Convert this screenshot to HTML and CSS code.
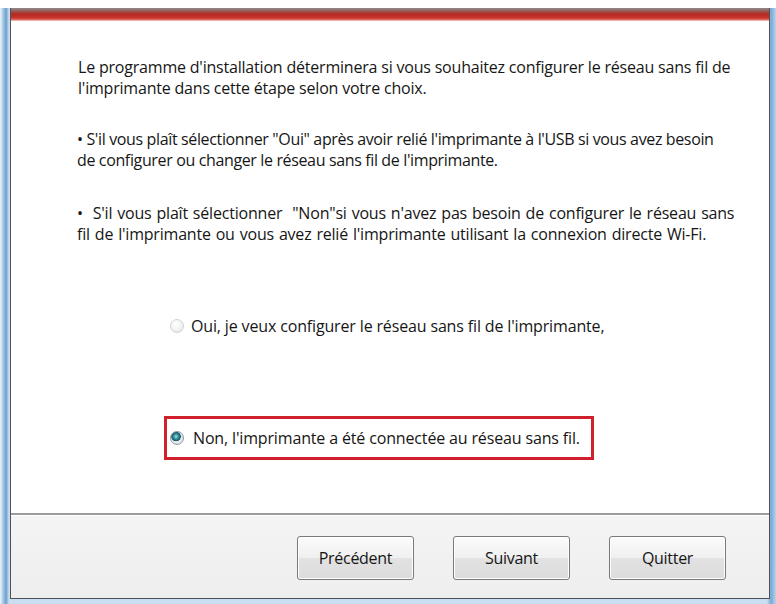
FILE: index.html
```html
<!DOCTYPE html>
<html lang="fr">
<head>
<meta charset="utf-8">
<title>Installation</title>
<link rel="stylesheet" href="styles.css">
</head>
<body>
<div class="window">
  <div class="dialog">
    <div class="titlebar"></div>
    <div class="content">
      <p class="intro">Le programme d'installation déterminera si vous souhaitez configurer le réseau sans fil de<br>l'imprimante dans cette étape selon votre choix.</p>
      <p class="bullet b1">• S'il vous plaît sélectionner "Oui" après avoir relié l'imprimante à l'USB si vous avez besoin<br>de configurer ou changer le réseau sans fil de l'imprimante.</p>
      <p class="bullet b2">•&nbsp; S'il vous plaît sélectionner &nbsp;"Non"si vous n'avez pas besoin de configurer le réseau sans<br>fil de l'imprimante ou vous avez relié l'imprimante utilisant la connexion directe Wi-Fi.</p>
      <div class="options">
        <div class="option opt-yes"><span class="radio"></span><span>Oui, je veux configurer le réseau sans fil de l'imprimante,</span></div>
        <div class="option opt-no"><span class="radio on"></span><span>Non, l'imprimante a été connectée au réseau sans fil.</span></div>
      </div>
    </div>
    <div class="footer">
      <button class="btn">Précédent</button>
      <button class="btn">Suivant</button>
      <button class="btn">Quitter</button>
    </div>
  </div>
</div>
</body>
</html>
```

FILE: styles.css
```css
html, body {
  margin: 0;
  padding: 0;
  background: #ffffff;
}

body {
  width: 776px;
  height: 604px;
  overflow: hidden;
  font-family: "Open Sans", "Liberation Sans", sans-serif;
  color: #161616;
}

.window {
  margin-top: 8px;
  height: 596px;
  box-sizing: border-box;
  padding: 0 6px 5px 10px;
  background: linear-gradient(to right, #eef5fb 0px, #a9cbe6 3px, #6d9fcb 6px, #c9def0 9px, #c9def0 767px, #7aa8d2 771px, #b8d4ec 776px);
  display: flex;
}

.dialog {
  flex: 1;
  display: flex;
  flex-direction: column;
  border: 1px solid #4e5258;
  border-top: none;
  background: #ffffff;
}

.titlebar {
  height: 13px;
  background: linear-gradient(to bottom, #8e8e8e 0px, #9a5a56 3px, #b52a22 6px, #c9342b 10px, #e27b72 12px, #f6e2de 13px);
}

.content {
  flex: 1;
  padding: 36px 0 0 66px;
  background: #ffffff;
}

.content p {
  margin: 0;
  font-size: 16px;
  line-height: 21px;
  letter-spacing: -0.2px;
  white-space: nowrap;
}

.intro {
  padding-left: 1px;
}

.content .b1 {
  margin-top: 30px;
  letter-spacing: -0.36px;
}

.content .b2 {
  margin-top: 32px;
  word-spacing: 1px;
}

.options {
  margin: 70px 0 0 87px;
  display: flex;
  flex-direction: column;
  gap: 79px;
}

.option {
  display: flex;
  align-items: center;
  gap: 7px;
  font-size: 16px;
  line-height: 22px;
  letter-spacing: -0.15px;
  white-space: nowrap;
}

.opt-yes {
  padding-left: 6px;
}

.opt-no {
  width: 430px;
  height: 44px;
  box-sizing: border-box;
  border: 3px solid #d0202c;
  padding-left: 3px;
  gap: 9px;
}

.radio {
  width: 14px;
  height: 14px;
  flex: none;
  box-sizing: border-box;
  border-radius: 50%;
  border: 1px solid #d2d2d2;
  background: radial-gradient(circle at 40% 35%, #ffffff 0%, #f2f2f2 55%, #dedede 100%);
}

.radio.on {
  border: 1px solid #8c9aa4;
  background:
    radial-gradient(circle at 42% 38%, #a8e4e4 0px, #3fa0a8 2px, #1d5e6c 4px, #1d5e6c 4.5px, transparent 5px),
    radial-gradient(circle, #f4f4f4 0%, #d8dde0 100%);
}

.footer {
  height: 85px;
  box-sizing: border-box;
  border-top: 2px solid #9c9c9c;
  box-shadow: inset 0 1px 0 #ffffff;
  background: linear-gradient(to bottom, #f4f4f4, #eeeeee);
  display: flex;
  justify-content: flex-end;
  align-items: flex-start;
  gap: 39px;
  padding: 21px 43px 0 0;
}

.btn {
  width: 117px;
  height: 44px;
  border: 1px solid #7a7a7a;
  border-radius: 3px;
  background: linear-gradient(to bottom, #fbfbfb 0%, #f0f0f0 50%, #e2e2e2 51%, #dcdcdc 100%);
  box-shadow: inset 0 0 0 1px #fdfdfd;
  font-family: "Open Sans", "Liberation Sans", sans-serif;
  font-size: 16px;
  letter-spacing: -0.3px;
  color: #161616;
  padding: 0;
}
```
